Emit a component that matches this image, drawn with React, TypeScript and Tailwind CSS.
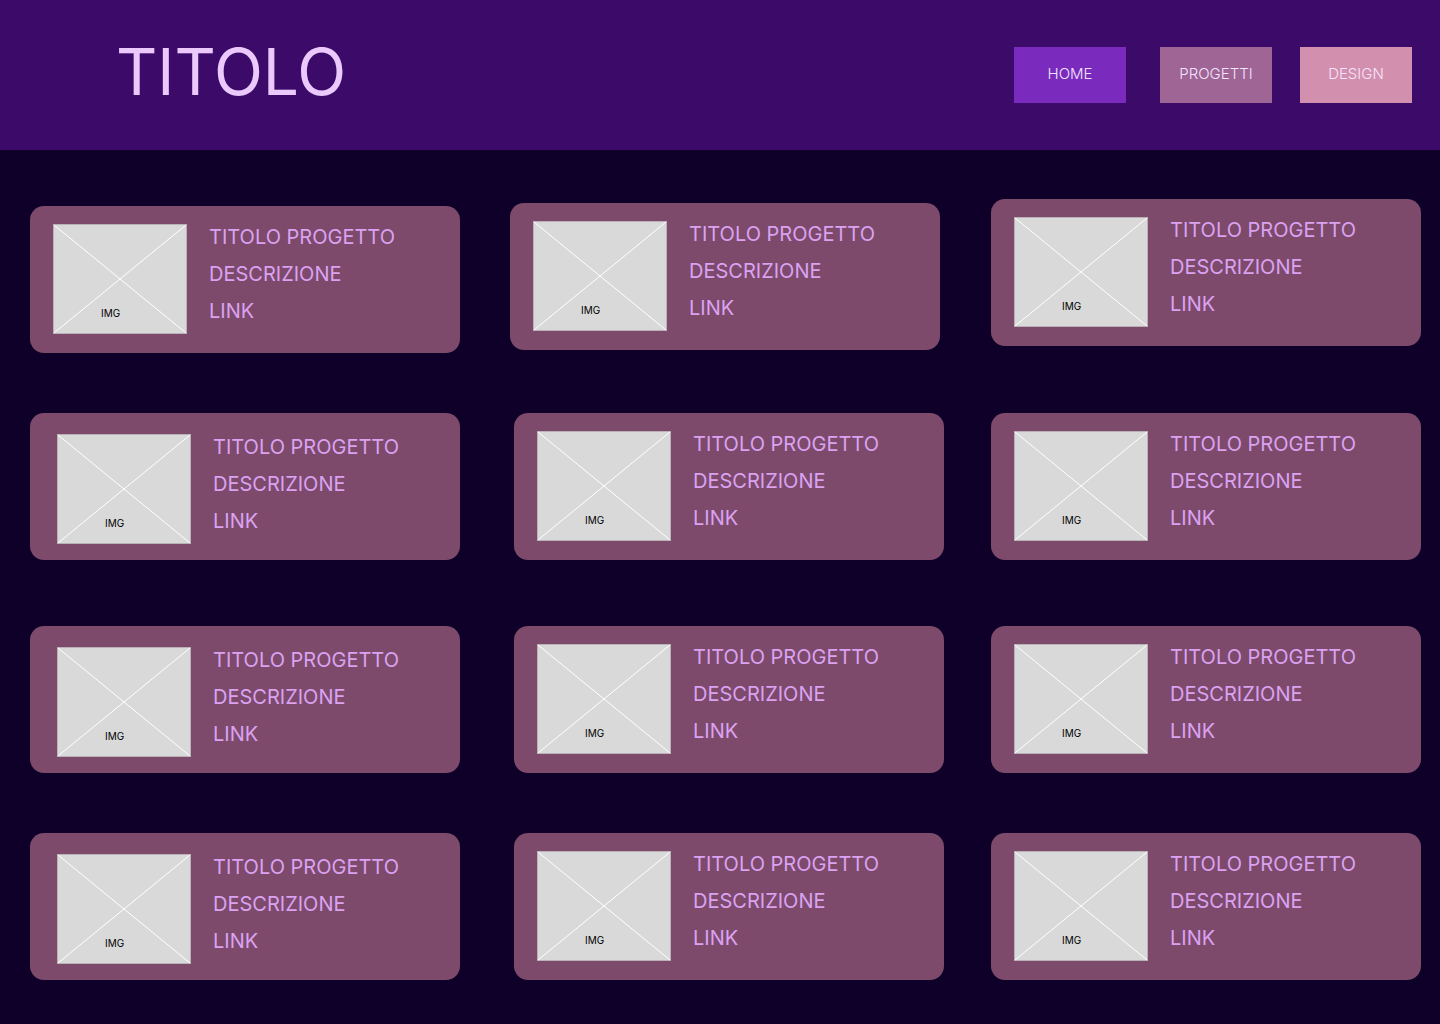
type Card = {
  cls: string;
  imgCls: string;
};

const rows: { cls: string; cards: Card[] }[] = [
  {
    cls: "mt-[49px]",
    cards: [
      { cls: "ml-[30px] mt-[7px]", imgCls: "ml-[23px] mt-[18px]" },
      { cls: "ml-[50px] mt-[4px]", imgCls: "ml-[23px] mt-[18px]" },
      { cls: "ml-[51px] mt-0", imgCls: "ml-[23px] mt-[18px]" },
    ],
  },
  {
    cls: "mt-[60px]",
    cards: [
      { cls: "ml-[30px]", imgCls: "ml-[27px] mt-[21px]" },
      { cls: "ml-[54px]", imgCls: "ml-[23px] mt-[18px]" },
      { cls: "ml-[47px]", imgCls: "ml-[23px] mt-[18px]" },
    ],
  },
  {
    cls: "mt-[66px]",
    cards: [
      { cls: "ml-[30px]", imgCls: "ml-[27px] mt-[21px]" },
      { cls: "ml-[54px]", imgCls: "ml-[23px] mt-[18px]" },
      { cls: "ml-[47px]", imgCls: "ml-[23px] mt-[18px]" },
    ],
  },
  {
    cls: "mt-[60px]",
    cards: [
      { cls: "ml-[30px]", imgCls: "ml-[27px] mt-[21px]" },
      { cls: "ml-[54px]", imgCls: "ml-[23px] mt-[18px]" },
      { cls: "ml-[47px]", imgCls: "ml-[23px] mt-[18px]" },
    ],
  },
];

function Placeholder() {
  return (
    <div className="relative w-[134px] h-[110px] shrink-0 bg-[#d9d9d9] border border-[#b9b3b8]">
      <svg className="absolute inset-0" width="132" height="108" viewBox="0 0 132 108">
        <line x1="0" y1="0" x2="132" y2="108" stroke="#ffffff" strokeWidth="1" />
        <line x1="132" y1="0" x2="0" y2="108" stroke="#ffffff" strokeWidth="1" />
      </svg>
      <span className="absolute left-[47px] top-[83px] text-[10px] leading-none text-black">IMG</span>
    </div>
  );
}

function ProjectCard({ cls, imgCls }: Card) {
  return (
    <div className={`w-[430px] h-[147px] shrink-0 rounded-[14px] bg-[#7d4a6b] flex items-start ${cls}`}>
      <div className={imgCls}>
        <Placeholder />
      </div>
      <div className={`flex flex-col gap-[13px] ml-[22px] pt-px ${imgCls.split(" ")[1]}`}>
        <span className="text-[20px] leading-6 text-[#daa2f1]">TITOLO PROGETTO</span>
        <span className="text-[20px] leading-6 text-[#daa2f1]">DESCRIZIONE</span>
        <span className="text-[20px] leading-6 text-[#daa2f1]">LINK</span>
      </div>
    </div>
  );
}

export default function App() {
  return (
    <div className="w-[1440px] h-[1024px] bg-[#0e0028] overflow-hidden" style={{ fontFamily: "Inter, 'Noto Sans', sans-serif" }}>
      <header className="h-[150px] bg-[#3c0b69] flex items-start">
        <h1 className="ml-[116px] mt-[33px] text-[64px] leading-[78px] font-normal text-[#ebc9fc]">TITOLO</h1>
        <nav className="ml-auto mr-[28px] mt-[47px] flex">
          <a className="w-[112px] h-[56px] pb-[2px] flex items-center justify-center bg-[#7a2bbe] text-[15px] font-light text-[#f3e4ff]">HOME</a>
          <a className="ml-[34px] w-[112px] h-[56px] pb-[2px] flex items-center justify-center bg-[#9e6595] text-[15px] font-light text-[#f3e4ff]">PROGETTI</a>
          <a className="ml-[28px] w-[112px] h-[56px] pb-[2px] flex items-center justify-center bg-[#d390ae] text-[15px] font-light text-[#f3e4ff]">DESIGN</a>
        </nav>
      </header>
      <main className="flex flex-col">
        {rows.map((row, i) => (
          <div key={i} className={`flex items-start ${row.cls}`}>
            {row.cards.map((c, j) => (
              <ProjectCard key={j} {...c} />
            ))}
          </div>
        ))}
      </main>
    </div>
  );
}
